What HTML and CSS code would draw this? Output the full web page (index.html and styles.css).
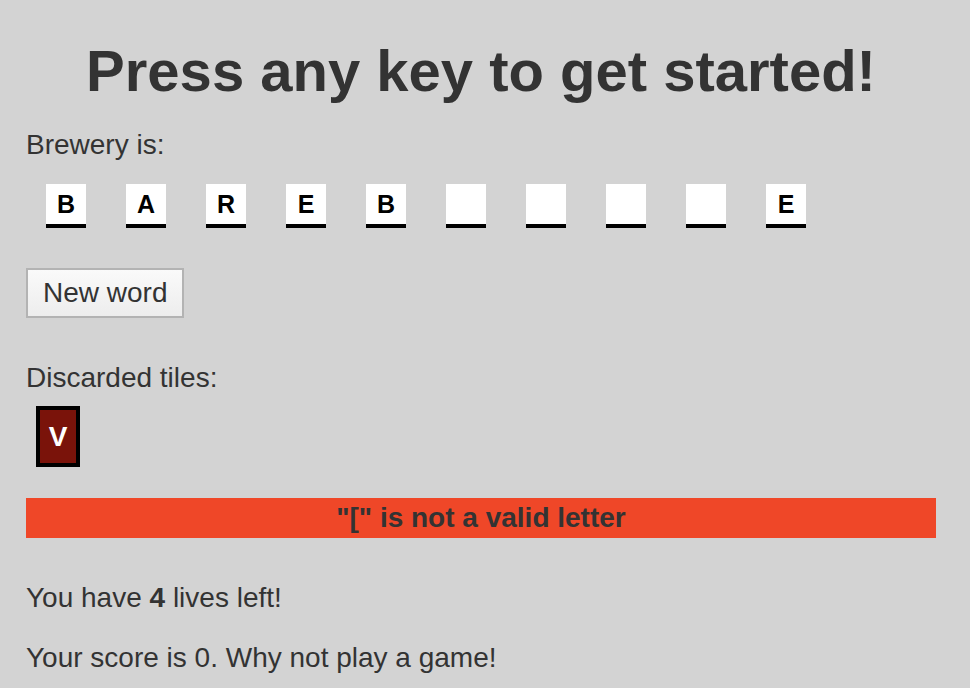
FILE: index.html
```html
<!DOCTYPE html>
<html>
<head>
<meta charset="utf-8">
<link rel="stylesheet" href="styles.css">
</head>
<body>
<div class="page">
  <h1 class="title">Press any key to get started!</h1>
  <div class="label brewery-label">Brewery is:</div>
  <div class="tiles">
    <div class="tile">B</div>
    <div class="tile">A</div>
    <div class="tile">R</div>
    <div class="tile">E</div>
    <div class="tile">B</div>
    <div class="tile"></div>
    <div class="tile"></div>
    <div class="tile"></div>
    <div class="tile"></div>
    <div class="tile">E</div>
  </div>
  <div class="btn-row"><button class="new-word">New word</button></div>
  <div class="label discard-label">Discarded tiles:</div>
  <div class="discards">
    <div class="discard">V</div>
  </div>
  <div class="banner">"[" is not a valid letter</div>
  <p class="line lives">You have <b>4</b> lives left!</p>
  <p class="line score">Your score is 0. Why not play a game!</p>
</div>
</body>
</html>
```
FILE: styles.css
```css
html, body {
  margin: 0;
  padding: 0;
  background: #d3d3d3;
}
body {
  font-family: "Liberation Sans", Arial, sans-serif;
  color: #333;
  font-size: 28px;
  line-height: 32px;
}
.page {
  width: 910px;
  padding: 38px 0 0 26px;
  display: flex;
  flex-direction: column;
  align-items: stretch;
}
.title {
  margin: 0;
  font-size: 58px;
  line-height: 66px;
  font-weight: bold;
  text-align: center;
}
.label {
  margin: 0;
}
.brewery-label {
  margin-top: 25px;
}
.tiles {
  display: flex;
  margin-top: 23px;
}
.tile {
  width: 40px;
  height: 40px;
  margin: 0 20px;
  background: #fff;
  border-bottom: 4px solid #000;
  color: #000;
  font-weight: bold;
  font-size: 25px;
  line-height: 40px;
  text-align: center;
}
.btn-row {
  margin-top: 40px;
  display: flex;
}
.new-word {
  font-family: "Liberation Sans", Arial, sans-serif;
  font-size: 28px;
  line-height: 32px;
  color: #333;
  padding: 7px 15px;
  border: 2px solid #b3b3b3;
  background: linear-gradient(#fafafa, #ededed);
  border-radius: 0;
  margin: 0;
}
.discard-label {
  margin-top: 44px;
}
.discards {
  display: flex;
  margin-top: 12px;
  padding-left: 10px;
}
.discard {
  width: 36px;
  height: 53px;
  border: 4px solid #000;
  background: #7a130a;
  color: #fff;
  font-weight: bold;
  font-size: 28px;
  line-height: 53px;
  text-align: center;
}
.banner {
  margin-top: 31px;
  height: 40px;
  line-height: 40px;
  background: #ef4728;
  font-weight: bold;
  text-align: center;
}
.line {
  margin: 0;
}
.lives {
  margin-top: 44px;
}
.score {
  margin-top: 28px;
}
```
